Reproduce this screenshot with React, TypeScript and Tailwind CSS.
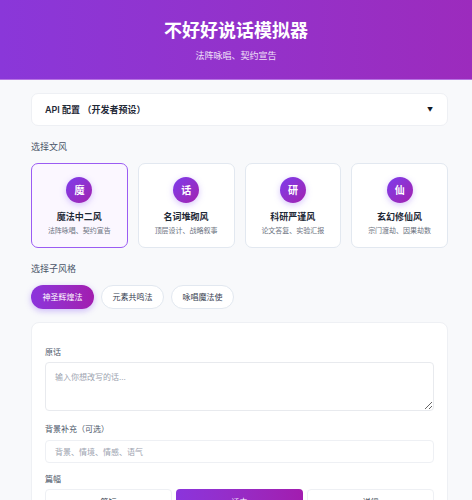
import { useState } from 'react'

const styles = [
    { icon: '魔', name: '魔法中二风', desc: '法阵咏唱、契约宣告' },
    { icon: '话', name: '名词堆砌风', desc: '顶层设计、战略叙事' },
    { icon: '研', name: '科研严谨风', desc: '论文答复、实验汇报' },
    { icon: '仙', name: '玄幻修仙风', desc: '宗门渡劫、因果劫数' },
]

const subStyles = ['神圣辉煌法', '元素共鸣法', '咏唱魔法使']
const lengths = ['简短', '适中', '详细']

export default function App() {
    const [style, setStyle] = useState(0)
    const [sub, setSub] = useState(0)
    const [len, setLen] = useState(1)

    return (
        <div className="min-h-screen bg-[#f8f9fb] font-['Inter','Noto_Sans_CJK_SC',sans-serif]">
            <header className="h-[80px] flex flex-col items-center pt-[20px] bg-gradient-to-r from-[#8a37d9] to-[#9c2bbd] border-b border-[#b774e2]">
                <h1 className="text-[18px] leading-[22px] font-bold text-white">不好好说话模拟器</h1>
                <p className="mt-[8px] text-[9px] leading-[12px] text-white/85">法阵咏唱、契约宣告</p>
            </header>

            <main className="pl-[31px] pr-[24px] pt-[13px] pb-6">
                <div className="h-[33px] pl-[13px] pr-[14px] flex items-center justify-between bg-white rounded-[7px] border border-[#eef0f4]">
                    <span className="text-[9px] font-semibold text-[#1f2937]">API 配置 （开发者预设）</span>
                    <span className="text-[6px] text-[#111827]">▼</span>
                </div>

                <div className="mt-[15px] text-[9px] leading-[12px] text-[#4a5568]">选择文风</div>
                <div className="mt-[10px] grid grid-cols-4 gap-[10px]">
                    {styles.map((s, i) => (
                        <button
                            key={s.name}
                            onClick={() => setStyle(i)}
                            className={
                                i === style
                                    ? 'h-[85px] flex flex-col items-center pt-[13px] rounded-[7px] border-[1.5px] border-[#9b5cf3] bg-[#fbf7ff]'
                                    : 'h-[85px] flex flex-col items-center pt-[13px] rounded-[7px] border border-[#e2e8f0] bg-white'
                            }
                        >
                            <span className="w-[26px] h-[26px] rounded-full flex items-center justify-center bg-gradient-to-br from-[#7c3aed] to-[#a21caf] text-white text-[10px] font-bold shadow-[0_2px_6px_rgba(139,92,246,0.35)]">
                                {s.icon}
                            </span>
                            <span className="mt-[8px] text-[9px] leading-[12px] font-bold text-[#1f2937]">{s.name}</span>
                            <span className="mt-[3px] text-[7px] leading-[10px] text-[#6b7280]">{s.desc}</span>
                        </button>
                    ))}
                </div>

                <div className="mt-[15px] text-[9px] leading-[12px] text-[#4a5568]">选择子风格</div>
                <div className="mt-[10px] flex gap-[7px]">
                    {subStyles.map((s, i) => (
                        <button
                            key={s}
                            onClick={() => setSub(i)}
                            className={
                                i === sub
                                    ? 'w-[63px] h-[24px] rounded-full text-[8px] text-white bg-gradient-to-r from-[#8b34dc] to-[#a21caf] shadow-[0_2px_6px_rgba(139,92,246,0.4)]'
                                    : 'w-[63px] h-[24px] rounded-full text-[8px] text-[#374151] bg-white border border-[#e2e8f0]'
                            }
                        >
                            {s}
                        </button>
                    ))}
                </div>

                <div className="mt-[13px] bg-white rounded-[8px] border border-[#eef0f4] pt-[23px] px-[13px] pb-4">
                    <label className="block text-[8px] leading-[12px] text-[#4a5568]">原话</label>
                    <textarea
                        placeholder="输入你想改写的话..."
                        className="mt-[4px] block w-full h-[49px] rounded-[4px] border border-[#e8eaee] px-[9px] py-[8px] text-[8px] text-[#374151] placeholder:text-[#9ca3af] outline-none"
                    />

                    <label className="mt-[12px] block text-[8px] leading-[12px] text-[#4a5568]">背景补充（可选）</label>
                    <input
                        placeholder="背景、情境、情感、语气"
                        className="mt-[5px] block w-full h-[23px] rounded-[4px] border border-[#eef0f4] px-[9px] text-[8px] text-[#374151] placeholder:text-[#9ca3af] outline-none"
                    />

                    <label className="mt-[10px] block text-[8px] leading-[12px] text-[#4a5568]">篇幅</label>
                    <div className="mt-[4px] grid grid-cols-3 gap-[4px]">
                        {lengths.map((l, i) => (
                            <button
                                key={l}
                                onClick={() => setLen(i)}
                                className={
                                    i === len
                                        ? 'h-[26px] rounded-[4px] text-[8px] text-white bg-gradient-to-r from-[#8b34dc] to-[#a21caf]'
                                        : 'h-[26px] rounded-[4px] text-[8px] text-[#374151] bg-white border border-[#eef0f4]'
                                }
                            >
                                {l}
                            </button>
                        ))}
                    </div>
                </div>
            </main>
        </div>
    )
}
